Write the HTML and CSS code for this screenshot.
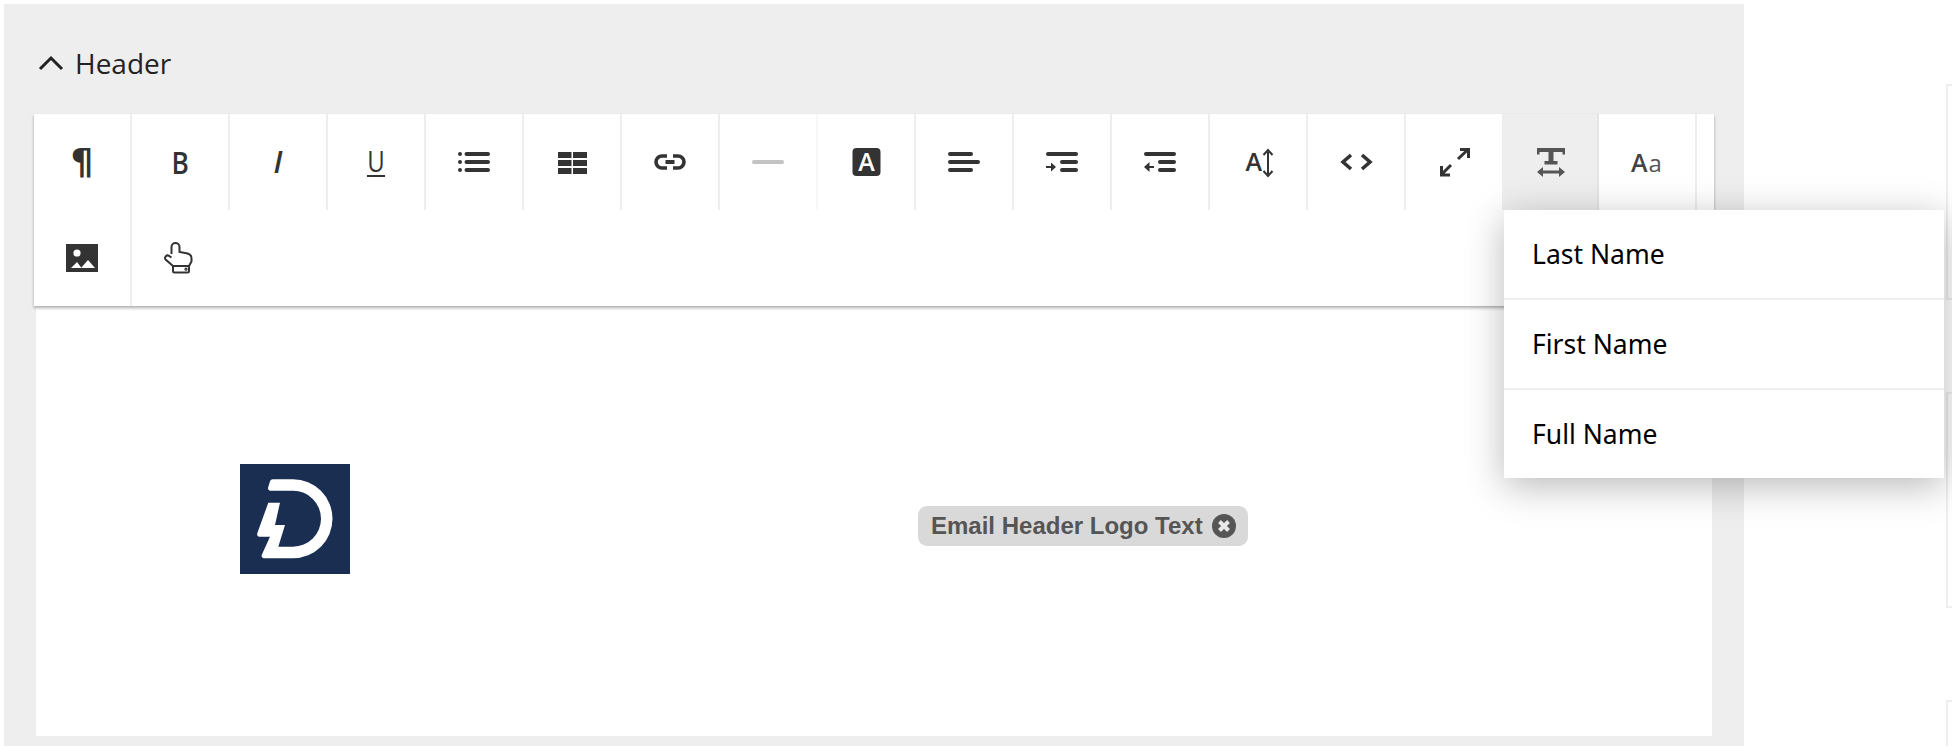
FILE: index.html
```html
<!DOCTYPE html>
<html lang="en">
<head>
<meta charset="utf-8">
<title>Header editor</title>
<link rel="stylesheet" href="styles.css">
</head>
<body>
<div class="page">
  <section class="panel">
    <header class="panel-head">
      <svg class="chevron" width="26" height="16" viewBox="0 0 26 16"><path d="M2 14 L13 3 L24 14" fill="none" stroke="#222" stroke-width="3"/></svg>
      <span class="panel-title">Header</span>
    </header>
    <div class="toolbar">
      <div class="tool-row">
        <div class="tool"><span class="glyph pilcrow">¶</span></div>
        <div class="tool"><span class="glyph bold">B</span></div>
        <div class="tool"><span class="glyph italic">I</span></div>
        <div class="tool"><span class="glyph under"><span class="under-letter">U</span></span></div>
        <div class="tool"><svg class="ico" viewBox="0 0 32 32"><g fill="#333"><circle cx="2" cy="8" r="2"/><circle cx="2" cy="16" r="2"/><circle cx="2" cy="24" r="2"/><rect x="6.5" y="6" width="25.5" height="4" rx="2"/><rect x="6.5" y="14" width="25.5" height="4" rx="2"/><rect x="6.5" y="22" width="25.5" height="4" rx="2"/></g></svg></div>
        <div class="tool"><svg class="ico" viewBox="0 0 32 32"><g fill="#333"><rect x="2" y="6" width="13.5" height="6"/><rect x="17" y="6" width="14" height="6"/><rect x="2" y="14" width="13.5" height="6"/><rect x="17" y="14" width="14" height="6"/><rect x="2" y="22" width="13.5" height="6"/><rect x="17" y="22" width="14" height="6"/></g></svg></div>
        <div class="tool"><svg class="ico" viewBox="0 0 32 32"><path d="M13 10H8a6 6 0 0 0 0 12h5M19 10h5a6 6 0 0 1 0 12h-5" fill="none" stroke="#333" stroke-width="3.6"/><rect x="11.5" y="14" width="9" height="4" fill="#333"/></svg></div>
        <div class="tool tool-faint"><svg class="ico" viewBox="0 0 32 32"><rect x="0" y="14" width="32" height="4" rx="2" fill="#c4c4c4"/></svg></div>
        <div class="tool"><svg class="ico" viewBox="0 0 32 32"><rect x="2.5" y="2" width="28" height="28" rx="4" fill="#333"/><text class="svg-a" x="16.5" y="25" text-anchor="middle" fill="#fff" font-size="25">A</text></svg></div>
        <div class="tool"><svg class="ico" viewBox="0 0 32 32"><g fill="#333"><rect x="0" y="6" width="25" height="4" rx="2"/><rect x="0" y="14" width="32" height="4" rx="2"/><rect x="0" y="22" width="25" height="4" rx="2"/></g></svg></div>
        <div class="tool"><svg class="ico" viewBox="0 0 32 32"><g fill="#333"><rect x="0" y="6" width="32" height="4" rx="2"/><rect x="14" y="14" width="18" height="4" rx="2"/><rect x="14" y="22" width="18" height="4" rx="2"/><rect x="0" y="20" width="7" height="2"/><path d="M5 16.5 L10 21 L5 25.5Z"/></g></svg></div>
        <div class="tool"><svg class="ico" viewBox="0 0 32 32"><g fill="#333"><rect x="0" y="6" width="32" height="4" rx="2"/><rect x="14" y="14" width="18" height="4" rx="2"/><rect x="14" y="22" width="18" height="4" rx="2"/><rect x="4" y="20" width="6" height="2"/><path d="M5.5 16 L0 21 L5.5 26Z"/></g></svg></div>
        <div class="tool"><svg class="ico" viewBox="0 0 32 32"><text class="svg-a" x="3.5" y="24.5" fill="#333" font-size="25">A</text><path d="M26 6V28" stroke="#333" stroke-width="2"/><path d="M21.5 9 L26 4 L30.5 9M21.5 25 L26 30 L30.5 25" fill="none" stroke="#333" stroke-width="2"/></svg></div>
        <div class="tool"><svg class="ico" viewBox="0 0 32 32"><path d="M11 9 L3 16 L11 23M22 9 L30 16 L22 23" fill="none" stroke="#333" stroke-width="3.6"/></svg></div>
        <div class="tool"><svg class="ico" viewBox="0 0 32 32"><path d="M20 13 L30 3.5M22 3.5H30.5V12M13 19 L4 28M3.5 20V29H12" fill="none" stroke="#333" stroke-width="3"/></svg></div>
        <div class="tool tool-active"><svg class="ico" viewBox="0 0 32 32"><g fill="#555"><path d="M2 2H30V8.5H27.5V6H18.5V15H22.5V18.5H9.5V15H13.5V6H4.5V8.5H2Z"/><rect x="6" y="24.5" width="20" height="3"/><path d="M8 21 L2 26 L8 31Z"/><path d="M24 21 L30 26 L24 31Z"/></g></svg></div>
        <div class="tool tool-case"><span class="case-word"><span class="case-big">A</span><span class="case-small">a</span></span></div>
        <div class="tool-end"></div>
      </div>
      <div class="tool-row">
        <div class="tool tool-low"><svg class="ico" viewBox="0 0 32 32"><rect x="0" y="2" width="32" height="28" fill="#333"/><circle cx="11" cy="11" r="3.6" fill="#fff"/><path d="M5 26 L11 20 L15.5 26ZM15 26 L22 18 L29 26Z" fill="#fff"/></svg></div>
        <div class="tool tool-plain tool-low"><svg class="ico" viewBox="0 0 32 32"><g transform="translate(-2 0)" fill="none" stroke="#333" stroke-width="2"><path d="M8.5 12V5a4 4 0 0 1 8 0V10l7 1.2q5 1 5 5V19.5L26 24H10L2.6 17.6a2.6 2.6 0 0 1 3.4-3.8L8.5 15.5"/><rect x="10" y="24" width="16" height="6.5" rx="1.5"/><circle cx="23" cy="27.2" r=".6"/></g></svg></div>
      </div>
    </div>
    <div class="editor">
      <div class="logo">
        <svg width="110" height="110" viewBox="0 0 110 110"><rect width="110" height="110" fill="#1a2e52"/><path d="M33 15.3H53A39.5 39.5 0 0 1 53 94.3H24a2.5 2.5 0 0 1-2.3-3.2L30 72.7H19.5a2.5 2.5 0 0 1-2.3-3.2L28.3 38.7H40L35 61H45L38.3 82.7H53A28 28 0 0 0 53 26.7H30.5a2.5 2.5 0 0 1-2.4-3.2L30 17.3a3 3 0 0 1 3-2Z" fill="#fff"/></svg>
      </div>
      <div class="chip">
        <span class="chip-text">Email Header Logo Text</span>
        <svg class="chip-x" width="24" height="24" viewBox="0 0 24 24"><circle cx="12" cy="12" r="12" fill="#555"/><path d="M7.5 7.5 L16.5 16.5M16.5 7.5 L7.5 16.5" stroke="#e8e8e8" stroke-width="4"/></svg>
      </div>
    </div>
    <ul class="menu">
      <li class="menu-item">Last Name</li>
      <li class="menu-item">First Name</li>
      <li class="menu-item">Full Name</li>
    </ul>
  </section>
  <aside class="side">
    <div class="side-box"></div>
    <div class="side-box"></div>
    <div class="side-box"></div>
  </aside>
</div>
</body>
</html>
```

FILE: styles.css
```css
* { box-sizing: border-box; }
html, body { margin: 0; padding: 0; background: #fff; }
body { width: 1952px; height: 746px; overflow: hidden; font-family: "Open Sans", sans-serif; }

.page { display: flex; align-items: flex-start; padding: 4px 0 0 4px; height: 746px; overflow: hidden; }

.panel { position: relative; flex: 0 0 1740px; height: 752px; background: #eee; padding: 0 30px; }
.panel-head { display: flex; align-items: center; height: 110px; padding: 8px 0 0 4px; gap: 11px; color: #222; }
.chevron { display: block; }
.panel-title { font-size: 28px; line-height: 40px; }

.toolbar { width: 1680px; background: #fff; box-shadow: 0 2px 3px rgba(0,0,0,.32); position: relative; z-index: 1; }
.tool-row { display: flex; height: 96px; }
.tool { flex: 0 0 98px; height: 96px; border-right: 2px solid #eee; display: flex; align-items: center; justify-content: center; color: #333; }
.tool-faint { border-right-color: #f8f8f8; }
.tool-active { flex-basis: 95px; background: #eee; border-right-color: #e4e4e4; }
.tool-plain { border-right: 0; }
.tool-end { flex: 1; }
.tool-case { color: #444; }
.case-word { line-height: 1; letter-spacing: 1px; }
.ico { width: 32px; height: 32px; display: block; overflow: visible; }
.svg-a { font-family: "Open Sans", sans-serif; font-weight: 600; }

.glyph { font-family: "Open Sans", sans-serif; font-size: 30px; line-height: 1; color: #333; }
.pilcrow { font-family: "DejaVu Sans", sans-serif; font-size: 36px; font-weight: 700; }
.bold { font-weight: 600; font-size: 31px; transform: scaleX(.85); }
.italic { font-style: italic; font-weight: 600; }
.under { border-bottom: 2px solid #333; line-height: 24px; width: 18px; height: 28px; margin-top: 2px; display: flex; justify-content: center; }
.under-letter { display: block; transform: scaleX(.8); }
.case-big { font-size: 25px; font-weight: 600; }
.case-small { font-size: 24px; color: #555; }

.editor { position: relative; margin: 0 2px; height: 430px; background: #fff; display: flex; align-items: center; padding: 0 0 0 204px; }
.logo { flex: 0 0 110px; height: 110px; margin-top: -4px; }
.logo svg { display: block; }
.chip { margin-left: 568px; margin-top: 10px; height: 40px; width: 330px; background: #d9d9d9; border-radius: 9px; display: flex; align-items: center; padding-left: 13px; gap: 9px; color: #555; }
.chip-text { font-family: "Liberation Sans", Arial, sans-serif; font-weight: 700; font-size: 24px; white-space: nowrap; }
.chip-x { flex: none; }

.menu { position: absolute; z-index: 2; top: 206px; left: 1500px; width: 440px; margin: 0; padding: 0; list-style: none; background: #fff; box-shadow: 0 8px 36px rgba(0,0,0,.28); font-family: "Noto Sans", sans-serif; font-size: 26.5px; color: #000; }
.menu-item { height: 90px; display: flex; align-items: center; padding: 0 0 0 28px; border-bottom: 2px solid #eee; }
.menu-item:last-child { height: 88px; border-bottom: 0; }

.side { flex: none; margin-left: 202px; padding-top: 80px; display: flex; flex-direction: column; gap: 92px; }
.side-box { width: 10px; height: 216px; border: 2px solid #eee; border-right: 0; flex: none; }
```
